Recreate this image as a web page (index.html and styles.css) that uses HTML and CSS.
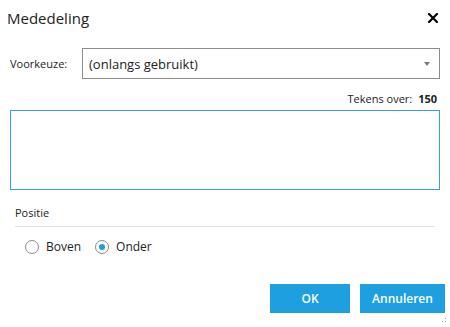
FILE: index.html
```html
<!DOCTYPE html>
<html lang="nl">
<head>
    <meta charset="UTF-8">
    <meta name="viewport" content="width=device-width, initial-scale=1.0">
    <title>Mededeling</title>
    <link rel="stylesheet" href="styles.css">
</head>
<body>
    <div class="dialog">
        <div class="header">
            <span class="title">Mededeling</span>
            <svg class="close" width="10" height="10" viewBox="0 0 10 10">
                <path d="M1 1 L9 9 M9 1 L1 9" stroke="#000" stroke-width="2.2" stroke-linecap="square"/>
            </svg>
        </div>

        <div class="row">
            <label class="label">Voorkeuze:</label>
            <div class="select">
                <span>(onlangs gebruikt)</span>
                <span class="arrow"></span>
            </div>
        </div>

        <div class="counter">Tekens over: <b>150</b></div>
        <div class="textarea"></div>

        <div class="group">
            <div class="group-title">Positie</div>
            <div class="radios">
                <label class="radio"><span class="dot"></span>Boven</label>
                <label class="radio"><span class="dot checked"></span>Onder</label>
            </div>
        </div>

        <div class="buttons">
            <button class="btn btn-ok">OK</button>
            <button class="btn btn-cancel">Annuleren</button>
        </div>
        <div class="grip"></div>
    </div>
</body>
</html>
```

FILE: styles.css
```css
body {
    margin: 0;
    background: #fff;
    font-family: "Open Sans", "Noto Sans", sans-serif;
    color: #222;
}
.dialog {
    position: relative;
    width: 450px;
    height: 327px;
}
.header {
    display: flex;
    justify-content: space-between;
    align-items: center;
    height: 35px;
    padding: 0 12px 0 7px;
}
.title {
    font-size: 15px;
    color: #222;
}
.close {
    display: block;
}
.row {
    display: flex;
    align-items: center;
    margin-top: 13px;
    padding-left: 10px;
}
.label {
    width: 72px;
    font-size: 11px;
}
.select {
    display: flex;
    justify-content: space-between;
    align-items: center;
    box-sizing: border-box;
    width: 358px;
    height: 31px;
    border: 1px solid #8c8c8c;
    padding: 0 9px 0 6px;
    font-size: 13px;
}
.arrow {
    width: 0;
    height: 0;
    border-left: 3px solid transparent;
    border-right: 3px solid transparent;
    border-top: 4px solid #777;
}
.counter {
    text-align: right;
    padding-right: 13px;
    margin-top: 11px;
    font-size: 11px;
    line-height: 18px;
}
.counter b {
    margin-left: 3px;
}
.textarea {
    box-sizing: border-box;
    margin: 2px 10px 0;
    height: 80px;
    border: 1px solid #3aa1d6;
}
.group {
    margin: 13px 15px 0;
}
.group-title {
    font-size: 11px;
    line-height: 20px;
    padding-bottom: 3px;
    border-bottom: 1px solid #e2e2e2;
}
.radios {
    display: flex;
    gap: 14px;
    padding-left: 10px;
    margin-top: 11px;
}
.radio {
    display: flex;
    align-items: center;
    font-size: 12px;
    line-height: 17px;
}
.dot {
    box-sizing: border-box;
    width: 14px;
    height: 14px;
    border: 1px solid #8a8a8a;
    border-radius: 50%;
    margin-right: 7px;
    display: flex;
    align-items: center;
    justify-content: center;
}
.dot.checked::after {
    content: "";
    width: 6px;
    height: 6px;
    border-radius: 50%;
    background: #1e9fe0;
}
.buttons {
    display: flex;
    justify-content: flex-end;
    gap: 10px;
    padding-right: 5px;
    margin-top: 29px;
}
.btn {
    height: 29px;
    border: none;
    background: #1ea0e0;
    color: #fff;
    font-family: inherit;
    font-size: 12px;
    font-weight: 600;
    padding: 0;
}
.btn-ok {
    width: 80px;
}
.btn-cancel {
    width: 85px;
}
.grip {
    position: absolute;
    right: 2px;
    bottom: 3px;
    width: 10px;
    height: 10px;
    background-image: radial-gradient(circle, #aaa 0.8px, transparent 1px);
    background-size: 3px 3px;
    clip-path: polygon(100% 0, 100% 100%, 0 100%);
}
```
